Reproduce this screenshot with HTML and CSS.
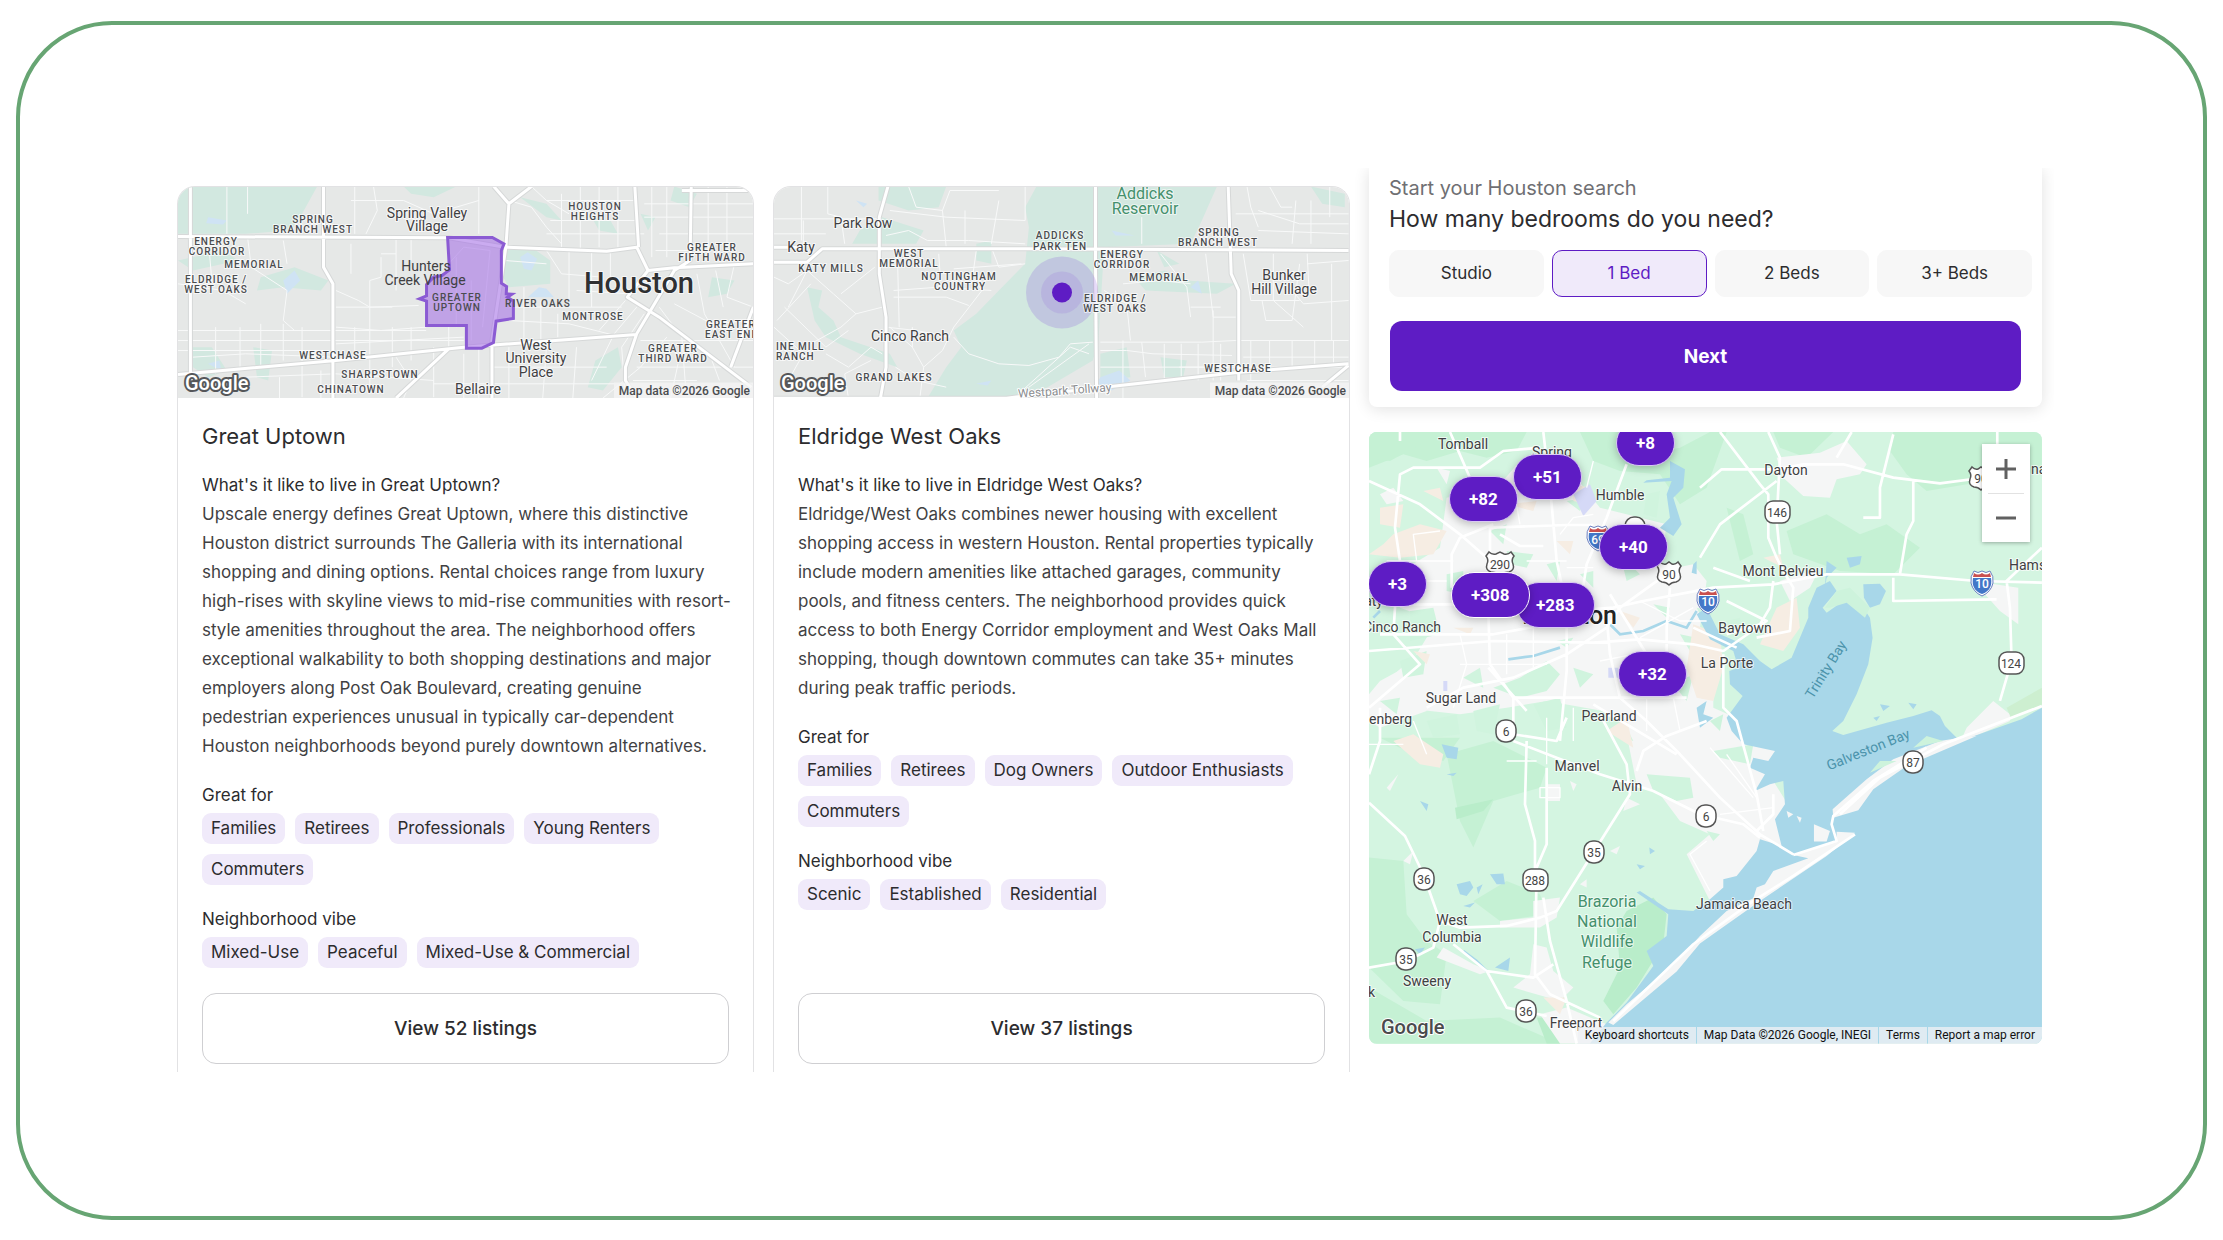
FILE: index.html
```html
<!DOCTYPE html>
<html lang="en">
<head>
<meta charset="utf-8">
<meta name="viewport" content="width=device-width, initial-scale=1">
<title>Houston neighborhoods</title>
<link rel="stylesheet" href="styles.css">
</head>
<body>
<main class="frame">
  <article class="card">
    <svg class="card-map" viewBox="0 0 575 212" preserveAspectRatio="xMidYMid slice" role="img" aria-label="Map of Great Uptown">
      <rect width="575" height="212" fill="#e6e8e7"/>
      <g transform="scale(.376 .3333) translate(-20 -18)">
        <g class="park">
          <path d="M20 18H390L350 100L320 150L200 160L20 160Z"/>
          <path d="M620 18H760L700 50L640 40ZM890 210L960 200L1010 240L1010 310L900 320L885 290ZM1120 110L1170 120L1190 160L1140 150ZM1340 18L1400 40L1380 80L1330 60ZM1250 100L1290 110L1270 150ZM1130 540L1190 500L1200 560L1150 630L1110 620ZM220 500L270 510L260 600L230 590ZM60 500L110 500L150 570L100 590L60 560ZM1440 290L1500 300L1480 340L1430 350ZM20 240L140 210L180 240L60 270ZM240 290L330 260L420 300L400 330L300 320L230 330ZM930 50L1000 70L1040 120L1000 110Z"/>
        </g>
        <path fill="#cfe3f4" d="M930 230L950 215L975 235L960 270L940 265ZM980 320L1000 325L1020 350L950 350ZM100 110L150 120L140 132L95 128ZM300 300L330 270L345 300L310 340ZM100 550L130 540L135 570Z"/>
        <g class="street">
          <path d="M150 18V160M205 18V100M490 18V160M540 18L550 90L520 160M620 60L700 100L820 60M820 18V160M480 60H620M600 170V330M560 230V290L530 300V440M480 190V280M600 220H560M640 170V240M100 170L110 300L60 330M205 170L215 260L310 330L300 420L330 450M300 180L310 250M20 310L140 330L200 370M440 380L590 380M440 330L500 360L530 380L660 375M20 450H680M20 480H780M20 510H420M120 440V580M185 440V560M240 430V560M300 430V540M350 440V650M490 440V530M530 440V640M590 440V560M640 440V540M700 500V650M740 440V500M440 490L780 470M440 440L560 450L680 440M60 530L200 520L440 530M290 590V653M400 570V653M200 590L440 580L700 600M600 530L640 600L620 653M780 520V653M820 500V653M900 500V653M700 610H1180M860 560H1160M1000 500L990 653M1080 500L1070 653M900 420L1060 430L1200 470M940 320V480M985 360V480M1030 400V470M900 380L1200 380M900 60L960 80L1000 140L1040 190M960 18L1000 60L1060 100M1040 40V200M1090 18V210M1140 18V200M1190 18V200M1000 60H1240M1010 120H1240M1000 160H1260M1280 18V230M1320 18V230M1430 18V240M1480 18V230M1260 70H1550M1260 110H1550M1300 160H1550M1290 210H1420M1000 210L1040 280L1150 290M1060 210V380M1120 210V380M1170 215V300M890 240L1000 250M1080 330L1220 340L1280 290M1240 380L1180 460L1120 600M1210 360L1140 450M1260 400L1200 500L1210 653M1300 380L1360 470L1370 620M1340 370L1440 430L1550 420M1400 280L1420 400L1500 560M1450 270L1470 380M1500 250L1480 350L1550 380M1320 470L1250 560L1150 653M1250 480H1550M1240 560H1550M1230 600H1400M1350 550L1330 653M1440 540L1460 600"/>
          <path d="M740 250L780 200L850 210L830 440M780 380L830 360M800 300V480M760 230V440"/>
        </g>
        <g class="road-shadow"><path d="M53 18V590M407 18V260L432 310V653M20 168L740 172L890 200L1160 212L1240 200L1270 270L1340 262L1550 250M860 18L900 70L892 200L875 330L855 480V653M960 18L900 70M1235 18L1245 200M1270 270L1215 350L1300 410L1545 620M1385 18L1382 240L1340 270L1240 460L1210 560V600L1240 653M20 582L440 540L780 500L1240 462M740 505L600 653M1360 30H1550M1550 380L1490 560"/></g>
        <g class="road"><path d="M53 18V590M407 18V260L432 310V653M20 168L740 172L890 200L1160 212L1240 200L1270 270L1340 262L1550 250M860 18L900 70L892 200L875 330L855 480V653M960 18L900 70M1235 18L1245 200M1270 270L1215 350L1300 410L1545 620M1385 18L1382 240L1340 270L1240 460L1210 560V600L1240 653M20 582L440 540L780 500L1240 462M740 505L600 653M1360 30H1550M1550 380L1490 560"/></g>
      </g>
      <path transform="scale(.376 .3333) translate(-20 -18)" class="area" d="M737 171H856L887 190L880 210V308L894 318L893 340L908 341L896 350L912 362V414L866 422L859 486L828 503H787V435H681V362L662 355L681 346V312L700 290L722 285L742 268Z"/>
      <g class="town" text-anchor="middle">
        <text x="249" y="31">Spring Valley</text><text x="249" y="44">Village</text>
        <text class="over-area" x="248" y="84">Hunters</text><text class="over-area" x="247" y="98">Creek Village</text>
        <text x="358" y="163">West</text><text x="358" y="176">University</text><text x="358" y="190">Place</text>
        <text x="300" y="207">Bellaire</text>
      </g>
      <g class="district" text-anchor="middle">
        <text x="135" y="36">SPRING</text><text x="135" y="46">BRANCH WEST</text>
        <text x="38" y="58">ENERGY</text><text x="39" y="68">CORRIDOR</text>
        <text x="76" y="81">MEMORIAL</text>
        <text x="38" y="96">ELDRIDGE /</text><text x="38" y="106">WEST OAKS</text>
        <text x="417" y="23">HOUSTON</text><text x="417" y="33">HEIGHTS</text>
        <text x="534" y="64">GREATER</text><text x="534" y="74">FIFTH WARD</text>
        <text class="over-area" x="360" y="120">RIVER OAKS</text><text x="415" y="133">MONTROSE</text>
        <text x="495" y="165">GREATER</text><text x="495" y="175">THIRD WARD</text>
        <text x="155" y="172">WESTCHASE</text><text x="202" y="191">SHARPSTOWN</text><text x="173" y="206">CHINATOWN</text>
        <text class="over-area" x="279" y="114">GREATER</text><text class="over-area" x="279" y="124">UPTOWN</text>
      </g>
      <g class="district"><text x="528" y="141">GREATER</text><text x="527" y="151">EAST END</text></g>
      <text class="city" x="461" y="106" text-anchor="middle">Houston</text>
      <text class="logo logo-light" x="7" y="203">Google</text>
      <rect x="436" y="196" width="139" height="16" fill="#f5f5f5" fill-opacity=".75"/>
      <text class="credit" x="572" y="208" text-anchor="end">Map data ©2026 Google</text>
    </svg>
    <div class="card-body">
      <h2>Great Uptown</h2>
      <h3>What's it like to live in Great Uptown?</h3>
      <p>Upscale energy defines Great Uptown, where this distinctive Houston district surrounds The Galleria with its international shopping and dining options. Rental choices range from luxury high-rises with skyline views to mid-rise communities with resort-style amenities throughout the area. The neighborhood offers exceptional walkability to both shopping destinations and major employers along Post Oak Boulevard, creating genuine<br>pedestrian experiences unusual in typically car-dependent Houston neighborhoods beyond purely downtown alternatives.</p>
      <h4>Great for</h4>
      <ul class="chips"><li>Families</li><li>Retirees</li><li>Professionals</li><li>Young Renters</li><li>Commuters</li></ul>
      <h4>Neighborhood vibe</h4>
      <ul class="chips"><li>Mixed-Use</li><li>Peaceful</li><li>Mixed-Use &amp; Commercial</li></ul>
      <button class="view" type="button">View 52 listings</button>
    </div>
  </article>

  <article class="card">
    <svg class="card-map" viewBox="0 0 575 212" preserveAspectRatio="xMidYMid slice" role="img" aria-label="Map of Eldridge West Oaks">
      <rect width="575" height="212" fill="#e6e8e7"/>
      <g transform="scale(.376 .3333) translate(-22 -18)">
        <path class="park" d="M720 18H1200L1160 120L1130 190L900 200L885 480L870 540L700 653H430L480 560L520 500L500 450L560 400L620 330L690 250L700 140L690 80ZM300 18H480L460 80L380 90L300 60ZM310 110L420 150L400 190L230 190L250 150ZM110 320L150 330L140 380L180 420L200 470L330 520L350 560L250 520L160 470L130 420ZM560 190L600 180L600 250L560 240ZM1450 18L1540 40L1540 80L1480 70ZM980 290L1060 270L1120 300L1250 310L1200 340L1010 330ZM890 520L960 500L970 590L890 600ZM1050 530L1120 540L1110 590L1060 590ZM1040 210L1100 250L1060 260Z"/>
        <path fill="#cfe3f4" d="M240 60L270 70L260 80ZM890 590L940 570L970 600L920 630L880 610ZM1130 320L1150 300L1160 340ZM560 610L600 600L590 615ZM920 150L980 165L930 165Z"/>
        <g class="street">
          <path d="M95 18V180M165 18V100L200 110L210 190M22 115H310M380 18L400 80L470 90L490 30H620M530 90V190M470 90L480 200M330 90L480 110L690 120M620 60L600 190M690 18V120M320 165L380 150L430 180H540L690 190M22 160H160M100 200V120M350 210L355 440M460 220L465 300M560 210L550 290L575 330L500 440L470 510L420 560L410 653M600 200L620 260L690 250M500 265L680 250M340 350L480 350L540 375M340 330L460 320L600 330M22 290L60 310L110 270L180 340L240 400L310 380M30 420L120 310M50 380L160 500L220 450M22 440L100 520L60 600M110 270L60 380M120 490L200 440L240 400M200 340L290 260M160 520L220 560L280 500L310 520M220 653L210 580L280 540M320 440L400 450L490 470M330 440L390 500L420 560M345 560L400 600L480 620M390 440V500M500 470L540 520L620 550L700 555L780 530L810 490L870 485M890 485H1160L1250 480L1550 480M890 510H960L1030 520L1240 525M700 620L860 490M660 653L810 500L860 520M950 480V653M1000 485L1010 590M1060 490V600M1105 490V600M1150 490V600M1190 390V600M1210 490V600M890 560H1200M900 330L960 370L970 480M930 330L940 400M1000 110V190M1050 220L1120 320L1130 410M1170 220L1190 410H1250M1130 380H1210M950 310L1050 300L1130 310M1270 220L1290 360H1420M1320 360L1330 420H1400L1420 250M1350 220V360L1430 440M1400 330L1430 370L1550 360M1410 60L1400 190M1340 18L1370 80H1400M1280 18L1290 80L1310 140M1450 60V190M1310 90L1420 130L1550 130M1310 150L1550 160M1500 18V110M1250 100L1550 100M1440 220L1445 330M1505 250V480M1550 240L1440 250M1270 530H1550M1290 480V600M1340 480V570M1400 480V560M1460 480V560M1510 480V550M1280 600H1550M1100 560H1550"/>
        </g>
        <g class="road-shadow"><path d="M325 18L302 110V280L320 410V560L305 653M22 245H110L150 205H690L1550 210M877 18V240L880 653M1230 18L1238 280L1258 330V600M22 200H90M22 653H640L900 620L1260 575L1550 550M1550 555L1480 620"/></g>
        <g class="road"><path d="M325 18L302 110V280L320 410V560L305 653M22 245H110L150 205H690L1550 210M877 18V240L880 653M1230 18L1238 280L1258 330V600M22 200H90M22 653H640L900 620L1260 575L1550 550M1550 555L1480 620"/></g>
      </g>
      <circle cx="288" cy="106" r="36" fill="#6a20d8" fill-opacity=".16"/>
      <circle cx="288" cy="106" r="21" fill="#6a20d8" fill-opacity=".1"/>
      <circle cx="288" cy="106" r="10" fill="#5e1cc4"/>
      <g class="town" text-anchor="middle">
        <text x="89" y="41">Park Row</text><text x="27" y="65">Katy</text>
        <text x="510" y="93">Bunker</text><text x="510" y="107">Hill Village</text><text x="136" y="154">Cinco Ranch</text>
      </g>
      <g class="nature" text-anchor="middle"><text x="371" y="12">Addicks</text><text x="371" y="27">Reservoir</text></g>
      <g class="district" text-anchor="middle">
        <text x="57" y="85">KATY MILLS</text><text x="135" y="70">WEST</text><text x="135" y="80">MEMORIAL</text>
        <text x="185" y="93">NOTTINGHAM</text><text x="186" y="103">COUNTRY</text>
        <text x="286" y="52">ADDICKS</text><text x="286" y="63">PARK TEN</text>
        <text x="348" y="71">ENERGY</text><text x="348" y="81">CORRIDOR</text><text x="385" y="94">MEMORIAL</text>
        <text x="445" y="49">SPRING</text><text x="444" y="59">BRANCH WEST</text>
        <text x="341" y="115">ELDRIDGE /</text><text x="341" y="125">WEST OAKS</text>
        <text x="120" y="194">GRAND LAKES</text><text x="464" y="185">WESTCHASE</text>
      </g>
      <g class="district"><text x="2" y="163">INE MILL</text><text x="2" y="173">RANCH</text></g>
      <text class="route-name" x="291" y="208" text-anchor="middle" transform="rotate(-4 291 208)">Westpark Tollway</text>
      <text class="logo logo-light" x="7" y="203">Google</text>
      <rect x="436" y="196" width="139" height="16" fill="#f5f5f5" fill-opacity=".75"/>
      <text class="credit" x="572" y="208" text-anchor="end">Map data ©2026 Google</text>
    </svg>
    <div class="card-body">
      <h2>Eldridge West Oaks</h2>
      <h3>What's it like to live in Eldridge West Oaks?</h3>
      <p>Eldridge/West Oaks combines newer housing with excellent shopping access in western Houston. Rental properties typically include modern amenities like attached garages, community pools, and fitness centers. The neighborhood provides quick access to both Energy Corridor employment and West Oaks Mall shopping, though downtown commutes can take 35+ minutes during peak traffic periods.</p>
      <h4>Great for</h4>
      <ul class="chips"><li>Families</li><li>Retirees</li><li>Dog Owners</li><li>Outdoor Enthusiasts</li><li>Commuters</li></ul>
      <h4>Neighborhood vibe</h4>
      <ul class="chips"><li>Scenic</li><li>Established</li><li>Residential</li></ul>
      <button class="view" type="button">View 37 listings</button>
    </div>
  </article>

  <div class="side">
    <form class="search">
      <p class="lead">Start your Houston search</p>
      <fieldset>
        <legend>How many bedrooms do you need?</legend>
        <div class="beds">
          <label><input type="radio" name="beds"><span>Studio</span></label>
          <label><input type="radio" name="beds" checked><span>1 Bed</span></label>
          <label><input type="radio" name="beds"><span>2 Beds</span></label>
          <label><input type="radio" name="beds"><span>3+ Beds</span></label>
        </div>
      </fieldset>
      <button class="next" type="button">Next</button>
    </form>

    <section class="map" aria-label="Houston area map">
      <svg class="map-art" viewBox="0 0 673 612" preserveAspectRatio="xMinYMin slice" aria-hidden="true">
        <defs>
          <g id="interstate">
            <path d="M-8 -12Q-4 -9 0 -12Q4 -9 8 -12Q12 -7 11 0Q9 9 0 13Q-9 9 -11 0Q-12 -7 -8 -12Z" fill="#fff" stroke="#6b7fc0" stroke-width="1"/>
            <path d="M-9 -5H9Q11 7 0 11Q-11 7 -9 -5Z" fill="#4377c8"/>
            <path d="M-8 -10Q-4 -7 0 -10Q4 -7 8 -10L9 -6H-9Z" fill="#c9504f"/>
          </g>
          <path id="us-route" d="M-9 -11Q-6 -8 -3 -9L0 -11L3 -9Q6 -8 9 -11L12 -7Q9 -3 11 1Q13 7 7 9Q3 9 0 12Q-3 9 -7 9Q-13 7 -11 1Q-9 -3 -12 -7Z" fill="#fff" stroke="#555" stroke-width="1.5"/>
          <path id="us-route-wide" d="M-11 -11Q-8 -8 -4 -9L0 -11L4 -9Q8 -8 11 -11L14 -7Q11 -3 13 1Q15 7 9 9Q4 9 0 12Q-4 9 -9 9Q-15 7 -13 1Q-11 -3 -14 -7Z" fill="#fff" stroke="#555" stroke-width="1.5"/>
          <rect id="state" x="-10" y="-11" width="20" height="22" rx="9"/>
          <rect id="state-wide" x="-12" y="-11" width="25" height="22" rx="8"/>
        </defs>
        <rect width="673" height="612" fill="#d4f5e1"/>
        <g transform="translate(-9 -11) scale(.3333)">
          <g fill="#c5f1d4">
            <path d="M27 33H500L470 90L380 110L300 90L200 120L130 100L27 140Z"/>
            <path d="M660 33H780L860 100L960 80L1050 33H1100L1040 200L960 250L900 160L780 150L700 120Z"/>
            <path d="M1600 33H2046V150L1880 180L1700 210L1640 160L1590 90Z"/>
            <path d="M1280 330L1400 280L1500 340L1580 310L1680 380L1600 460L1440 450L1300 400Z"/>
            <path d="M27 33H200V60L90 120L27 110ZM1100 260L1150 280L1180 400L1140 420Z"/>
            <path d="M260 1000L400 960L560 1040L540 1100L400 1140L340 1280L300 1200ZM27 1310L130 1320L140 1480L200 1560L260 1600L240 1750L130 1740L27 1640ZM60 950L300 950L250 1020L120 980ZM340 1440L440 1380L540 1420L560 1480L420 1500Z"/>
            <path d="M27 1700L200 1800L420 1790L600 1868H27ZM1240 33H1420L1340 110L1260 80Z"/>
          </g>
          <g fill="#b9edca">
            <path d="M285 1160L400 1135L370 1170L290 1195Z"/>
            <path d="M800 1470L880 1430L920 1480L910 1570L830 1700L760 1780L730 1740L780 1640L770 1520Z"/>
            <path d="M530 1790L620 1790L600 1868H560Z"/>
          </g>
          <g fill="#f5f6f6">
            <path d="M260 230L420 190L480 120L640 160L720 260L920 310L900 450L1000 430L1040 480L1020 620L1060 700L1060 860L1150 900L1260 1000L1240 1080L1290 1160L1260 1300L1180 1320L1080 1420L1050 1440L980 1300L1050 1240L960 1200L900 1120L830 1090L800 940L730 870L560 840L440 860L300 880L120 860L80 780L170 700L230 600L120 560L140 440L240 380Z"/>
            <path d="M1250 110L1380 95L1460 60L1520 130L1500 160L1430 175L1410 230L1330 225L1270 170Z"/>
            <path d="M60 780L170 720L200 870L60 920L27 900V820ZM420 1500L520 1490V1440L600 1430L590 1490L540 1520H420ZM520 1570L560 1580L580 1650L640 1700L600 1740L460 1700L510 1660ZM250 1580L340 1630L390 1650L360 1660L230 1610Z"/>
            <path d="M1840 480L1975 500V610L1920 570ZM1820 920L1900 840L1950 880V900L1800 965ZM1260 480L1380 440L1350 500L1290 540ZM540 1780L620 1760L740 1810L690 1868H600Z"/>
            <path d="M560 1090H600V1140H560ZM800 1130L840 1150L790 1170ZM750 1290L780 1275L770 1300ZM660 1390L680 1375V1400ZM130 1320L160 1290L150 1330ZM80 1100L115 1060L90 1110ZM630 1080L650 1090L640 1110ZM560 90L600 100L590 140ZM230 140L270 150L260 190ZM60 220L100 200L130 240L80 250Z"/>
          </g>
          <g fill="#d0f4de">
            <path d="M260 460L310 450V520L260 510ZM150 570L220 560L240 640L150 660ZM440 390L520 400L500 440L450 430ZM560 430L600 420L590 480ZM390 330L440 310L430 370ZM780 400L840 460L800 480ZM860 220L900 210L890 290L850 280ZM620 240L680 230L660 270ZM120 720L200 690L190 760L130 770ZM310 770L360 740L370 800ZM400 800L480 770L560 720L600 760L560 810L480 830ZM520 850L600 830L620 920L560 930ZM340 870L420 850L400 940L350 930ZM640 740L700 760L660 800ZM720 880L790 900L820 960L760 940ZM940 790L1000 760L980 840ZM200 900L290 880L300 940L220 950ZM60 840L120 830L110 880ZM880 550L930 560L920 590ZM960 640L1010 650L990 690ZM660 460L700 450L700 500ZM840 710L880 690L870 740ZM1040 1230L1080 1240L1060 1260ZM1010 560L1060 570L1040 620ZM860 1060L990 1070L1000 1130L950 1140L880 1110ZM480 560L510 550L520 590L490 600ZM590 660L640 650L620 680Z"/>
            <path d="M1100 600L1140 590L1150 640L1110 650ZM1060 990L1180 970L1170 1030L1080 1010Z"/>
          </g>
          <g fill="#f6ede3">
            <path d="M60 260L130 250L120 320L60 310ZM100 340L180 310L260 330L220 400L120 410L27 400L70 370ZM190 210L240 200L250 240ZM640 190L690 200L680 250L640 240ZM1000 610L1080 640L1090 740L1060 840L1010 830L980 740ZM1250 560L1310 530L1320 620L1270 690L1200 670ZM1210 410L1260 400L1270 440ZM100 960L160 940L250 1000L240 1040L180 1030ZM550 1730L620 1730L600 1780ZM780 570L840 590L820 620ZM280 620L340 620L330 640ZM160 690L210 700L200 730ZM740 930L800 890L820 980ZM440 250L530 240L520 270ZM590 360L640 360L630 400Z"/>
          </g>
          <path fill="#d5d9f7" d="M640 220L690 190L710 240L670 285ZM745 740H775V770H745ZM250 780H262V810H250Z"/>
          <g class="water">
            <path d="M2046 860L1985 895L1800 960L1755 915L1740 885L1715 868L1660 885L1580 905L1450 942L1417 930L1450 900L1490 820L1525 730L1538 650L1530 590L1510 560L1480 545L1450 540L1400 575L1388 560L1430 510L1410 480L1370 500L1345 560L1345 590L1320 650L1295 710L1235 745L1200 720L1150 670L1080 640L1040 560L1010 580L1050 655L1120 690L1135 740L1108 750L1110 790L1148 825L1100 890L1115 930L1150 970L1245 990L1225 1020L1180 1010L1170 1040L1215 1060L1185 1110L1230 1090L1270 1080L1275 1150L1245 1195L1265 1275L1200 1255L1190 1290L1130 1365L1090 1375L1090 1400L1050 1435L1000 1470L925 1465L840 1410L830 1415L925 1480L920 1545L860 1590L880 1635L800 1745L740 1805L690 1868H2046Z"/>
            <path d="M1510 490L1560 488L1578 510L1560 550L1530 560L1512 530ZM1400 420L1430 440L1400 470L1395 500ZM1460 410L1505 405L1500 430L1470 440ZM930 120L975 145L970 200L940 230L965 310L940 345L900 320L930 290L920 220L935 180L850 185L860 178L930 170ZM245 970L295 980L290 1015L260 1010ZM290 1390L330 1380L340 1400L320 1425L300 1420ZM390 1360L430 1358L435 1390L410 1390ZM350 1400L368 1390L355 1420ZM310 1455L345 1445L330 1460ZM405 1640L450 1610L445 1650ZM165 1585L195 1580L180 1600ZM868 1280L885 1290L870 1300ZM830 1330L855 1335L840 1345ZM1010 860L1040 840L1030 880L1060 890L1020 920ZM1560 850L1590 855L1570 870ZM1645 845L1670 850L1660 865ZM1540 890L1560 885L1550 900ZM1000 430L1010 420V460L995 455ZM180 1140L205 1150L200 1170ZM260 1060L290 1055L280 1065Z"/>
            <path class="stream" d="M750 610L780 640L850 630L920 600L980 620L1010 570M445 715L520 705L600 680M40 590L60 570M310 1590L350 1620L380 1650"/>
          </g>
          <path fill="#f5f6f6" d="M1420 1190L1418 1165L1440 1145L1520 1075L1600 1015L1740 960L1800 950L1850 945L1640 1035L1540 1105L1495 1168ZM1485 1235L1430 1232L1430 1262L1370 1280L1300 1302L1345 1312L1240 1350L1215 1390L1190 1400L1180 1432L1100 1470L1020 1545L940 1632L800 1750L745 1805L760 1812L950 1652L1020 1568L1200 1440L1400 1305ZM1362 1210L1410 1230L1400 1262H1362ZM1280 1170L1300 1180L1285 1190ZM1310 1185L1325 1190L1320 1205Z"/>
          <path fill="#cdf3dc" d="M1395 560L1430 510L1470 500L1530 560L1515 590L1460 545L1410 560ZM1530 1055L1560 1020L1610 1020ZM1660 980L1700 945L1750 960ZM1050 900L1090 880L1080 930Z"/>
          <path fill="#cdefd0" d="M1940 860L2046 800V855L1955 895Z"/>
          <g class="highway">
            <path d="M27 180L180 250L300 340L380 410L440 480L540 620M120 420L105 320L120 160L160 140L360 140L430 90L540 80M270 33L330 170M550 33L575 250L590 420L620 560M800 130L740 290L680 430L660 560M390 400V320L620 312H700M420 340L480 375H550M275 500V400L300 350L400 310M27 550H280L480 560L620 570L760 560L850 540L1060 500L1240 490L1400 460H1620L1850 480L2046 485M60 640L400 640L620 600M27 690L400 660L700 665L840 655L1000 670L1090 690M620 570L620 750L600 960M740 590L750 700L780 830L860 900L960 1000L1080 1130L1200 1240L1300 1300M200 860L310 800L460 770L620 700L740 620L780 560L960 430M385 570L390 730L460 830L460 940M385 740L500 870M930 500L920 620V700M750 520L860 700M27 860L180 730L100 640L110 480M620 890L590 960L460 940M120 33L120 60M60 860V960L27 1060M27 1145L135 1245L190 1360L240 1500L300 1520L440 1515L540 1490L590 1470L703 1290L810 1120L800 1030L720 880M460 960L590 1010L720 1060L880 1110L1020 1180L1150 1210L1200 1250M560 1040V1270L530 1340L525 1660L570 1720L720 1790M500 960L495 1150L525 1260V1400M550 1430L570 1560L620 1740L650 1868M27 1640L140 1620L220 1580L240 1500M280 1570L380 1650L440 1760L560 1785M380 1650L520 1670L580 1630M460 830L720 830L980 830M700 850L950 1000M1080 33L1200 190L1225 220V350L1250 410L1270 450L1300 500L1290 630L1190 650M27 1060L60 960M1020 410L1080 310L1250 180M1020 200L1085 145H1250L1330 130L1450 130L1600 170L1740 187L1910 165M1225 33L1260 110L1250 300L1260 400M1475 33L1430 110M1660 180V300L1640 340L1620 460M1600 470V540L1910 535M2046 380L1940 480L1950 560L1955 720L1920 840M1090 700V860L1130 900L1190 1120L1210 1230M1000 620L1130 680M1170 480L1060 440M1600 40L1560 200V290H1510M1912 33V110M1100 540L1220 600L1090 690M1240 480L1230 560L1200 610L1100 640M830 1050L850 990L920 945L1040 900M1700 980L1540 1080L1420 1185L1415 1210L1430 1260L1300 1302M2046 855L1750 970L1560 1070L1440 1180M1485 1240L1300 1365L1180 1440L1000 1570L760 1800M1240 1120V1180L1190 1230"/>
            <path class="minor" d="M170 420L160 340L240 330M300 640L320 730L280 860M440 640V760M520 600V740M300 730H560M620 440H700M460 200L480 310M840 540L960 600L1040 600M840 650L1000 560M500 420L620 420M80 420H280M60 480H260M600 340L640 290L700 280M700 120L680 200M720 720L820 700M560 890V1030M640 860V960M160 900L200 1000M27 970H130M860 820V930M940 830L960 930M1040 1260L990 1300L1050 1410M1080 1180L1240 1160M1100 1000L1190 1130M1050 980L1180 1130M440 1020H530M540 1100H600V1130H540Z"/>
          </g>
        </g>
        <g class="shields">
          <use href="#us-route-wide" x="131" y="131"/><text x="131" y="137">290</text>
          <use href="#us-route" x="300" y="141"/><text x="300" y="147">90</text>
          <use href="#us-route" x="612" y="46"/><text x="612" y="51">90</text>
          <use href="#interstate" x="229" y="106"/><text class="on-blue" x="229" y="112">69</text>
          <use href="#interstate" x="339" y="169"/><text class="on-blue" x="339" y="174">10</text>
          <use href="#interstate" x="613" y="151"/><text class="on-blue" x="613" y="156">10</text>
          <g class="plate">
            <use href="#state" x="266" y="96"/>
            <use href="#state-wide" x="408" y="80"/><use href="#state-wide" x="642" y="231"/><use href="#state-wide" x="166" y="448"/>
            <use href="#state" x="137" y="299"/><use href="#state" x="337" y="384"/><use href="#state" x="544" y="330"/>
            <use href="#state" x="225" y="420"/><use href="#state" x="55" y="447"/><use href="#state" x="37" y="527"/><use href="#state" x="157" y="579"/>
          </g>
          <text x="408" y="85">146</text><text x="642" y="236">124</text><text x="166" y="453">288</text>
          <text x="137" y="304">6</text><text x="337" y="389">6</text><text x="544" y="335">87</text>
          <text x="225" y="425">35</text><text x="55" y="452">36</text><text x="37" y="532">35</text><text x="157" y="584">36</text>
        </g>
        <g class="town" text-anchor="middle">
          <text x="94" y="17">Tomball</text><text x="183" y="25">Spring</text><text x="251" y="68">Humble</text>
          <text x="92" y="271">Sugar Land</text><text x="240" y="289">Pearland</text><text x="358" y="236">La Porte</text>
          <text x="376" y="201">Baytown</text><text x="414" y="144">Mont Belvieu</text><text x="417" y="43">Dayton</text>
          <text x="208" y="339">Manvel</text><text x="258" y="359">Alvin</text><text x="83" y="493">West</text><text x="83" y="510">Columbia</text>
          <text x="58" y="554">Sweeny</text><text x="207" y="596">Freeport</text><text x="375" y="477">Jamaica Beach</text>
        </g>
        <g class="town" text-anchor="end">
          <text x="14" y="174">Katy</text><text x="72" y="200">Cinco Ranch</text><text x="43" y="292">Rosenberg</text><text x="6" y="565">k</text>
        </g>
        <g class="town"><text x="640" y="138">Hamshire</text><text x="662" y="42">na</text></g>
        <text class="metro" x="248" y="192" text-anchor="end">Houston</text>
        <g class="nature" text-anchor="middle">
          <text x="238" y="475">Brazoria</text><text x="238" y="495">National</text><text x="238" y="515">Wildlife</text><text x="238" y="536">Refuge</text>
        </g>
        <g class="bay" text-anchor="middle">
          <text transform="translate(461 240) rotate(-58)">Trinity Bay</text>
          <text transform="translate(501 322) rotate(-22)">Galveston Bay</text>
        </g>
        <text class="logo logo-dark" x="12" y="602">Google</text>
      </svg>
      <button class="pin pin-8" type="button">+8</button>
      <button class="pin pin-51" type="button">+51</button>
      <button class="pin pin-82" type="button">+82</button>
      <button class="pin pin-40" type="button">+40</button>
      <button class="pin pin-3" type="button">+3</button>
      <button class="pin pin-283" type="button">+283</button>
      <button class="pin pin-308" type="button">+308</button>
      <button class="pin pin-32" type="button">+32</button>
      <div class="zoom">
        <button type="button" aria-label="Zoom in"><svg viewBox="0 0 20 20"><path d="M10 0V20M0 10H20"/></svg></button>
        <button type="button" aria-label="Zoom out"><svg viewBox="0 0 20 20"><path d="M0 10H20"/></svg></button>
      </div>
      <div class="legal">
        <button type="button">Keyboard shortcuts</button>
        <span>Map Data ©2026 Google, INEGI</span>
        <a href="#terms">Terms</a>
        <a href="#report">Report a map error</a>
      </div>
    </section>
  </div>
</main>
</body>
</html>
```
FILE: styles.css
```css
* { box-sizing: border-box; }

body {
  margin: 0;
  padding: 21px 16px 20px;
  background: #fff;
  color: #2c2c2e;
  font-family: Inter, "Liberation Sans", sans-serif;
  font-size: 17px;
  line-height: 29px;
}

button { font: inherit; color: inherit; cursor: pointer; }

.frame {
  display: grid;
  grid-template-columns: 577fr 577fr 673fr;
  gap: 19px;
  align-items: start;
  min-height: calc(100vh - 41px);
  padding: 143px 161px 144px 157px;
  border: 4px solid #67a573;
  border-radius: 96px;
}

/* Neighborhood cards */
.card {
  display: flex;
  flex-direction: column;
  align-self: stretch;
  margin-top: 18px;
  border: 1px solid #e2e2e4;
  border-bottom: 0;
  border-radius: 18px 18px 0 0;
  overflow: hidden;
}

.card-map { display: block; width: 100%; height: 211px; }

.card-body {
  display: flex;
  flex: 1;
  flex-direction: column;
  padding: 23px 24px 8px;
}

h2, h3, h4, p, ul { margin: 0; padding: 0; }
h2 { margin-bottom: 20px; font-size: 22px; line-height: 30px; font-weight: 400; }
h3 { font-size: 17px; font-weight: 400; }
h4 { margin: 20px 0 3px; font-size: 17px; font-weight: 400; }
.card p { margin-right: -6px; color: #414143; }

.chips { display: flex; flex-wrap: wrap; gap: 10px; list-style: none; }
.chips li {
  padding: 0 9px;
  border-radius: 9px;
  background: #f0eafa;
  line-height: 31px;
}

.view {
  height: 71px;
  margin-top: auto;
  border: 1px solid #cfcfd2;
  border-radius: 14px;
  background: #fff;
  font-size: 19px;
  font-weight: 500;
}

/* Search panel and area map */
.side { display: flex; flex-direction: column; gap: 25px; min-width: 0; }

.search {
  padding: 6px 21px 16px;
  border-radius: 0 0 8px 8px;
  background: #fff;
  box-shadow: 0 2px 16px rgba(0, 0, 0, .12);
  clip-path: inset(0 -12px -24px -15px);
}

.lead { color: #6f6f73; font-size: 20px; line-height: 29px; }
fieldset { min-width: 0; margin: 0 -11px 24px 0; padding: 0; border: 0; }
.lead, fieldset { margin-left: -1px; }
legend { padding: 0; font-size: 23px; line-height: 32px; }

.beds { display: grid; grid-template-columns: repeat(4, 1fr); gap: 8px; padding-top: 15px; }
.beds label { position: relative; display: block; }
.beds input { position: absolute; inset: 0; margin: 0; opacity: 0; }
.beds span {
  display: block;
  border: 1px solid #f7f7f7;
  border-radius: 10px;
  background: #f7f7f7;
  line-height: 45px;
  text-align: center;
}
.beds input:checked + span { border-color: #5e1cc4; background: #f0eafa; color: #5e1cc4; }

.next {
  width: 100%;
  height: 70px;
  border: 0;
  border-radius: 12px;
  background: #5e1cc4;
  color: #fff;
  font-size: 19px;
  font-weight: 700;
}

.map {
  position: relative;
  height: 612px;
  border-radius: 8px;
  overflow: hidden;
  font-family: Roboto, sans-serif;
}
.map-art { display: block; width: 100%; height: 100%; }

.pin {
  position: absolute;
  min-width: 58px;
  height: 46px;
  padding: 0 19px;
  border: 1px solid #d9c9f3;
  border-radius: 23px;
  background: #5e1cc4;
  color: #fff;
  font-size: 17px;
  font-weight: 700;
  line-height: 44px;
  text-align: center;
  box-shadow: 0 2px 8px rgba(0, 0, 0, .25);
}
.pin-8 { left: 247px; top: -12px; }
.pin-51 { left: 144px; top: 22px; }
.pin-82 { left: 80px; top: 44px; }
.pin-40 { left: 230px; top: 92px; }
.pin-3 { left: -1px; top: 129px; }
.pin-283 { left: 147px; top: 150px; }
.pin-308 { left: 82px; top: 140px; border-color: #fff; }
.pin-32 { left: 249px; top: 219px; }

.zoom {
  position: absolute;
  top: 12px;
  right: 12px;
  width: 48px;
  padding: 0 6px;
  background: #fff;
  box-shadow: 0 1px 4px rgba(0, 0, 0, .3);
}
.zoom button {
  display: flex;
  align-items: center;
  justify-content: center;
  width: 100%;
  height: 49px;
  padding: 0;
  border: 0;
  background: none;
}
.zoom button + button { border-top: 1px solid #e2e2e2; }
.zoom svg { width: 20px; height: 20px; fill: none; stroke: #616161; stroke-width: 3; }

.legal {
  position: absolute;
  right: 0;
  bottom: 0;
  display: flex;
  color: #111;
  font-size: 12px;
  line-height: 17px;
}
.legal > * {
  padding: 0 7px;
  border: 0;
  background: rgba(238, 241, 245, .78);
  color: inherit;
  text-decoration: none;
}
.legal > * + * { margin-left: 1px; }

/* Map drawing */
.park { fill: #d2e8e0; }
.street path { fill: none; stroke: #f8f9f9; stroke-width: 1; vector-effect: non-scaling-stroke; }
.road path, .road-shadow path { fill: none; stroke: #fff; stroke-width: 3; stroke-linejoin: round; vector-effect: non-scaling-stroke; }
.road-shadow path { stroke: #d6d8d8; stroke-width: 5; }
.area { fill: #a673e6; fill-opacity: .6; stroke: #8b5bd3; stroke-width: 3; vector-effect: non-scaling-stroke; }
.water { fill: #a8d7e9; }
.stream { fill: none; stroke: #a8d7e9; stroke-width: 8; }
.highway path { fill: none; stroke: #fff; stroke-width: 8; stroke-linejoin: round; }
.highway .minor { stroke-width: 4; }

svg text { font-family: Roboto, sans-serif; stroke-linejoin: round; paint-order: stroke; }
.town text { fill: #3f4042; stroke: #fff; stroke-opacity: .7; stroke-width: 2px; font-size: 14px; }
.district text { fill: #4a4c4f; stroke: #fff; stroke-opacity: .7; stroke-width: 2px; font-size: 10px; font-weight: 500; letter-spacing: 1px; }
.town .over-area, .district .over-area { stroke: none; }
.nature text { fill: #44906c; stroke: #fff; stroke-opacity: .6; stroke-width: 2px; font-size: 16px; }
.bay text { fill: #4b93ab; font-size: 14px; }
.city { fill: #2f3032; stroke: #fff; stroke-opacity: .7; stroke-width: 2px; font-size: 29px; font-weight: 500; }
.metro { fill: #222; stroke: #fff; stroke-width: 2px; font-size: 25px; font-weight: 500; }
.route-name { fill: #8b8d90; stroke: #fff; stroke-width: 2px; font-size: 12px; }
.credit { fill: #4a4c4f; font-size: 12px; font-weight: 500; }
.logo { font-size: 20px; font-weight: 500; }
.logo-light { fill: #fff; stroke: #55575a; stroke-width: 4px; }
.logo-dark { fill: #4a4b4d; stroke: #fff; stroke-width: 2px; }
.shields text { fill: #444; font-size: 12px; text-anchor: middle; }
.shields .on-blue { fill: #fff; font-weight: 500; }
.plate { fill: #fff; stroke: #555; stroke-width: 1.5; }
```
